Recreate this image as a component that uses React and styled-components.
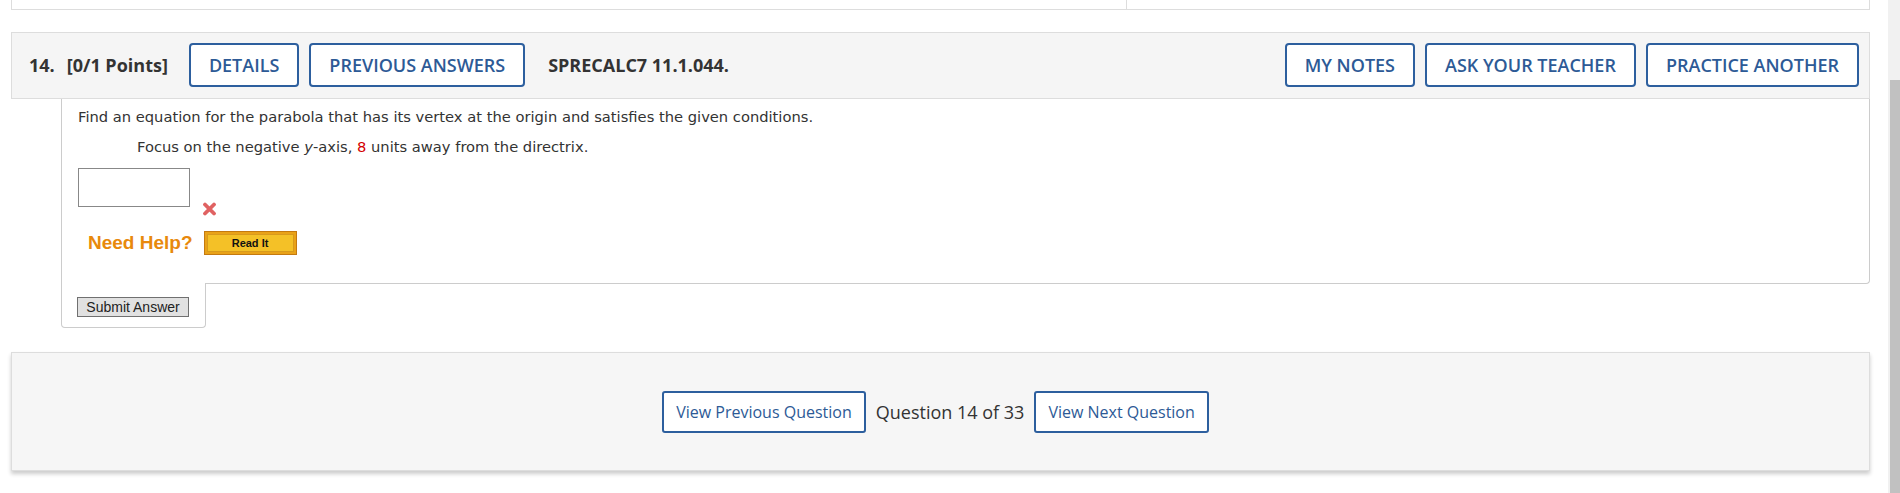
import React from 'react';
import styled, { createGlobalStyle } from 'styled-components';

const GlobalStyle = createGlobalStyle`
  html, body {
    margin: 0;
    padding: 0;
    background: #fff;
  }
  body {
    font-family: "Open Sans", "Liberation Sans", sans-serif;
    color: #333;
  }
  * { box-sizing: border-box; }
`;

function WrongMark() {
    return (
        <svg width="15" height="14" viewBox="0 0 15 14">
            <path d="M3 2.5 L12 11.5 M12 2.5 L3 11.5" stroke="#e06262" strokeWidth="3.8" strokeLinecap="round" />
        </svg>
    );
}

function App() {
    return (
        <Page>
            <GlobalStyle />
            <Main>
                <TopBox>
                    <TopCell />
                </TopBox>

                <Header>
                    <QNumber>14.</QNumber>
                    <Points>[0/1 Points]</Points>
                    <HeadButton>DETAILS</HeadButton>
                    <HeadButton>PREVIOUS ANSWERS</HeadButton>
                    <Code>SPRECALC7 11.1.044.</Code>
                    <Spacer />
                    <HeadButton>MY NOTES</HeadButton>
                    <HeadButton>ASK YOUR TEACHER</HeadButton>
                    <HeadButton>PRACTICE ANOTHER</HeadButton>
                </Header>

                <Content>
                    <QuestionBody>
                        <Prompt>Find an equation for the parabola that has its vertex at the origin and satisfies the given conditions.</Prompt>
                        <Condition>
                            Focus on the negative <i>y</i>-axis, <Given>8</Given> units away from the directrix.
                        </Condition>
                        <AnswerRow>
                            <AnswerInput />
                            <WrongMark />
                        </AnswerRow>
                        <HelpRow>
                            <HelpLabel>Need Help?</HelpLabel>
                            <ReadIt><span>Read It</span></ReadIt>
                        </HelpRow>
                    </QuestionBody>
                    <SubmitTab>
                        <SubmitButton>Submit Answer</SubmitButton>
                    </SubmitTab>
                </Content>

                <Footer>
                    <NavButton>View Previous Question</NavButton>
                    <Counter>Question 14 of 33</Counter>
                    <NavButton>View Next Question</NavButton>
                </Footer>
            </Main>
            <ScrollTrack>
                <ScrollThumb />
            </ScrollTrack>
        </Page>
    );
}

const Page = styled.div`
  display: flex;
  height: 493px;
  overflow: hidden;
`;
const Main = styled.div`
  flex: 1;
  padding: 0 18px 0 11px;
`;
const TopBox = styled.div`
  display: flex;
  height: 10px;
  border: 1px solid #ddd;
  border-top: none;
`;
const TopCell = styled.div`
  flex: 0 0 1115px;
  border-right: 1px solid #ddd;
`;
const Header = styled.div`
  display: flex;
  align-items: center;
  gap: 10px;
  margin-top: 22px;
  height: 67px;
  padding: 10px 10px 11px 17px;
  background: #f5f5f5;
  border: 1px solid #ddd;
`;
const QNumber = styled.div`
  font-size: 18px;
  font-weight: 700;
  color: #333;
  margin-right: 2px;
`;
const Points = styled.div`
  font-size: 18px;
  font-weight: 700;
  color: #333;
  margin-right: 11px;
`;
const HeadButton = styled.button`
  height: 44px;
  padding: 0 18px;
  background: #fff;
  border: 2px solid #2d5f9e;
  border-radius: 4px;
  font-family: "Open Sans", "Liberation Sans", sans-serif;
  font-size: 18px;
  font-weight: 600;
  color: #2d5a96;
  cursor: pointer;
`;
const Code = styled.div`
  margin-left: 13px;
  font-size: 18px;
  font-weight: 700;
  color: #333;
`;
const Spacer = styled.div`
  flex: 1;
`;
const Content = styled.div`
  margin-left: 50px;
`;
const QuestionBody = styled.div`
  border: 1px solid #ccc;
  border-top: none;
  border-bottom-right-radius: 4px;
  padding: 9px 16px 28px;
  font-family: "DejaVu Sans", Verdana, sans-serif;
  font-size: 14.7px;
  color: #333;
`;
const Prompt = styled.div`
  line-height: 18px;
`;
const Condition = styled.div`
  margin-top: 12px;
  padding-left: 59px;
  line-height: 18px;
`;
const Given = styled.span`
  color: #d40000;
`;
const AnswerRow = styled.div`
  display: flex;
  align-items: flex-end;
  gap: 12px;
  margin-top: 12px;
`;
const AnswerInput = styled.input`
  width: 112px;
  height: 39px;
  margin-bottom: 9px;
  border: 1px solid #888;
  background: #fff;
`;
const HelpRow = styled.div`
  display: flex;
  align-items: center;
  gap: 11px;
  margin-top: 15px;
  padding-left: 10px;
`;
const HelpLabel = styled.div`
  font-family: "Liberation Sans", Arial, sans-serif;
  font-size: 19px;
  font-weight: 700;
  color: #e8890c;
`;
const ReadIt = styled.div`
  width: 93px;
  height: 24px;
  padding: 2px;
  background: #e9a218;
  border: 1px solid #c47a10;
  span {
    display: flex;
    align-items: center;
    justify-content: center;
    height: 100%;
    background: #f4c127;
    border: 1px solid #d89a1c;
    font-family: "Liberation Sans", Arial, sans-serif;
    font-size: 11px;
    font-weight: 700;
    color: #111;
  }
`;
const SubmitTab = styled.div`
  width: 145px;
  margin-top: -1px;
  padding: 14px 0 10px 15px;
  background: #fff;
  border: 1px solid #ccc;
  border-top: none;
  border-radius: 0 0 4px 4px;
`;
const SubmitButton = styled.button`
  display: block;
  width: 112px;
  height: 20px;
  padding: 0;
  background: #e1e1e1;
  border: 1px solid #707070;
  font-family: "Liberation Sans", Arial, sans-serif;
  font-size: 14px;
  color: #222;
`;
const Footer = styled.div`
  display: flex;
  align-items: center;
  justify-content: center;
  margin-top: 24px;
  height: 119px;
  padding-right: 10px;
  background: #f6f6f6;
  border: 1px solid #ddd;
  box-shadow: 0 3px 4px rgba(0, 0, 0, 0.2);
`;
const NavButton = styled.button`
  height: 42px;
  padding: 0 12px;
  background: #fff;
  border: 2px solid #2d5f9e;
  border-radius: 3px;
  font-family: "Open Sans", "Liberation Sans", sans-serif;
  font-size: 16px;
  color: #2d5a96;
  cursor: pointer;
`;
const Counter = styled.div`
  margin: 0 10px;
  font-size: 18px;
  color: #333;
`;
const ScrollTrack = styled.div`
  flex: 0 0 12px;
  padding: 80px 0 0 2px;
  background: #f1f1f1;
`;
const ScrollThumb = styled.div`
  height: 100%;
  background: #c1c1c1;
`;

export default App;
